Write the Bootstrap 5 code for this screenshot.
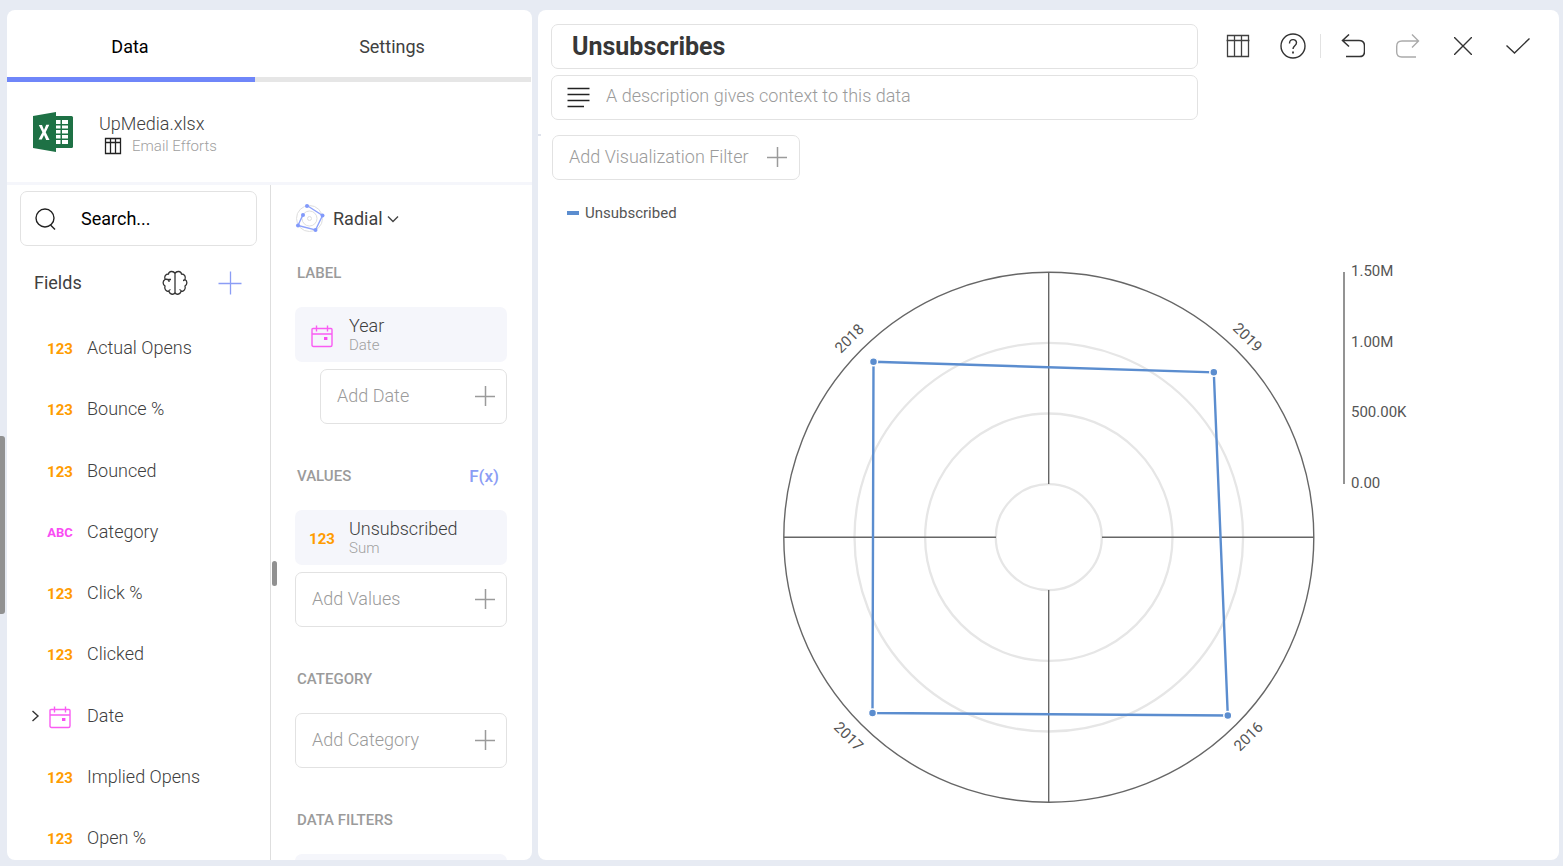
<!DOCTYPE html>
<html lang="en">
<head>
<meta charset="utf-8">
<meta name="viewport" content="width=device-width, initial-scale=1">
<title>Visualization Editor</title>
<link href="https://cdn.jsdelivr.net/npm/bootstrap@5.3.0/dist/css/bootstrap.min.css" rel="stylesheet">
<style>
  :root { --line:#e2e2e2; --ink:#404040; --muted:#9b9b9b; --accent:#6f86f9; --soft:#f5f6fb; }
  body { background:#e7ebf3; font-family:Roboto, "Liberation Sans", sans-serif; font-size:18px; line-height:24px; color:var(--ink); font-weight:300; }
  svg { display:block; fill:none; flex:none; }
  button { color:inherit; font:inherit; background:none; border:0; padding:0; }
  .shell { height:100vh; padding:10px 4px 6px 7px; gap:6px; }
  .pane { background:#fff; border-radius:8px; overflow:hidden; }
  .side { width:525px; flex:none; }
  .page-thumb { left:0; top:436px; width:5px; height:178px; background:#919191; border-radius:0 3px 3px 0; }
  .tabs-row { padding-right:1px; flex:none; }
  .tab-btn { height:72px; border-bottom:5px solid #e6e6e6; font-weight:400; padding:6px 2px 0 0; }
  .tab-btn.on { width:248px; border-color:var(--accent); color:#000; }
  .source { height:103px; flex:none; border-bottom:3px solid var(--soft); padding:0 24px 0 25px; }
  .source-name { line-height:27px; }
  .source-sheet { gap:10px; margin-left:5px; }
  .sub { font-size:15px; line-height:18px; color:#a0a0a0; }
  .lower { min-height:0; }
  .fields-col { width:264px; flex:none; border-right:1px solid #dedede; padding-top:6px; }
  .box { border:1px solid var(--line); border-radius:7px; }
  .search { height:55px; margin:0 13px; padding:0 14px; gap:24px; }
  .plain-input { border:0; outline:0; background:none; padding:0; min-width:0; flex:1; color:inherit; font:inherit; }
  .search .plain-input { color:#000; font-weight:400; }
  .plain-input::placeholder { color:inherit; opacity:1; }
  .fields-head { height:74px; padding:0 28px 0 27px; font-weight:400; }
  .head-tools { gap:30px; }
  .field-list { padding-top:6px; }
  .field { height:44px; flex:none; padding-left:24px; }
  .field .caret { width:16px; }
  .kind { width:26px; font-size:15px; font-weight:700; text-align:center; color:#ff9c00; padding-top:2px; }
  .kind.abc { color:#f94cf3; font-size:13px; }
  .kind-gap { gap:14px; }
  .setup { padding:13px 25px 0 24px; overflow:hidden; }
  .radial { height:42px; margin-bottom:-2px; font-weight:400; }
  .sec { font-size:15px; line-height:20px; font-weight:500; color:var(--muted); margin:42px 2px 24px; height:20px; }
  .sec.first { margin-top:25px; }
  .fx { color:#8b9df5; font-size:17px; font-weight:500; margin-right:6px; }
  .chip { background:var(--soft); border-radius:7px; height:55px; flex:none; padding-left:14px; gap:14px; margin-bottom:7px; text-align:left; }
  .chip-name { line-height:21px; }
  .add { height:55px; flex:none; padding:0 11px 2px 16px; color:var(--muted); }
  .inset { margin-left:25px; }
  .handle { left:1px; top:376px; width:5px; height:25px; border-radius:3px; background:#919191; }
  .main-pane { padding:14px 13px 0; }
  .title-box { height:45px; padding:0 20px; }
  .title-box .plain-input { font-size:25px; font-weight:700; color:#373737; }
  .desc-box { height:45px; margin-top:6px; padding:0 15px 2px; gap:16px; color:var(--muted); }
  .desc-box .plain-input { padding-bottom:2px; }
  .toolbar { margin-left:12px; margin-right:1px; }
  .tool { width:55px; height:44px; }
  .tool-sep { width:1px; height:24px; margin-right:4px; background:var(--line); }
  .filter { height:45px; width:248px; margin:15px 0 0 1px; padding:0 12px 2px 16px; color:var(--muted); }
  .legend { height:30px; margin:18px 0 0 16px; font-size:15px; font-weight:400; color:#555; gap:6px; }
  .swatch { width:12px; height:4px; background:#5b8dcf; }
  .chart { flex:1; min-height:0; width:100%; }
  .chart text { font-size:15px; fill:#555; font-weight:400; }
  .split-mark { left:0; top:124px; width:3px; height:2px; background:#dfe3ec; }
</style>
</head>
<body>
<svg width="0" height="0" class="position-absolute" aria-hidden="true">
  <symbol id="plus" viewBox="0 0 20 20"><path d="M0 10.500H20M10.500 0V20" stroke="currentColor" stroke-width="1.500"/></symbol>
  <symbol id="cal" viewBox="0 0 22 24"><path d="M2 4.500h18q1 0 1 1V21q0 1.500-1.500 1.500h-17Q1 22.500 1 21V5.500q0-1 1-1ZM1 10h20M5.500 1.500v6M16.500 1.500v6" stroke="#f95cf3" stroke-width="1.400"/><rect x="13" y="13" width="3.400" height="3" fill="#f94cf3"/></symbol>
  <symbol id="grid" viewBox="0 0 24 24"><path d="M1.500 1.500h21v21h-21zM0.500 6.500h23M8.500 1v22M15.500 1v22" stroke="currentColor" stroke-width="1.300"/></symbol>
  <symbol id="grid-small" viewBox="0 0 18 18"><path d="M1.500 1.500h15v15h-15zM1 5.500h16M6.500 1v16M11.500 1v16" stroke="currentColor" stroke-width="1.300"/></symbol>
</svg>
<div class="shell d-flex">
  <div class="page-thumb position-absolute"></div>
  <aside class="pane side d-flex flex-column">
    <div class="tabs-row d-flex">
      <button class="tab-btn on">Data</button>
      <button class="tab-btn flex-fill">Settings</button>
    </div>
    <div class="source d-flex align-items-center">
      <svg width="43" height="42" viewBox="0 0 43 42" aria-hidden="true">
        <path d="M23 5h16.500q1.500 0 1.500 1.500v29q0 1.500-1.500 1.500H23z" fill="#1e7145"/>
        <path d="M24 9h4.500v4H24zM30 9h6v4h-6zM24 14.500h4.500v3H24zM30 14.500h6v3h-6zM24 19h4.500v3.500H24zM30 19h6v3.500h-6zM24 24h4.500v3.500H24zM30 24h6v3.500h-6zM24 29h4.500v4H24zM30 29h6v4h-6z" fill="#fff"/>
        <path d="M1 5 24 1v40L1 37z" fill="#1e7145"/>
        <path d="M6.800 14h3.200l2 5 2.200-5.300h3.100L13.700 21.300l3.800 7.700h-3.300L12 24l-2.200 4.500H6.600l3.800-7.200z" fill="#fff"/>
      </svg>
      <div class="flex-fill ms-4">
        <div class="source-name">UpMedia.xlsx</div>
        <div class="source-sheet d-flex align-items-center sub"><svg width="18" height="18" color="#222"><use href="#grid-small"/></svg><span>Email Efforts</span></div>
      </div>
      <button aria-label="More"><svg width="16" height="20" viewBox="0 0 16 20" fill="#333"><circle cx="8" cy="3" r="1.600"/><circle cx="8" cy="10" r="1.600"/><circle cx="8" cy="17" r="1.600"/></svg></button>
    </div>
    <div class="lower d-flex flex-fill overflow-hidden">
      <section class="fields-col d-flex flex-column">
        <label class="search box d-flex align-items-center flex-shrink-0">
          <svg width="22" height="24" viewBox="0 0 22 24" stroke="#222" stroke-width="1.400"><circle cx="10" cy="11" r="9"/><path d="m15.500 18 4.500 4.500"/></svg>
          <input class="plain-input" type="text" placeholder="Search..." aria-label="Search fields">
        </label>
        <div class="fields-head d-flex align-items-center justify-content-between flex-shrink-0">
          <span>Fields</span>
          <span class="head-tools d-flex align-items-center">
            <button aria-label="Smart fields"><svg width="26" height="26" viewBox="0 0 26 26" stroke="#333" stroke-width="1.300"><path d="M13 2v22M13 3.500C11.500.5 7 1 6.500 4 3.500 4 2 6.500 3 9.500 .5 11 .5 14.500 3 16c-1 3 1 5.500 4 5.500C8 25 12 25 13 22.500M13 3.500C14.500.5 19 1 19.500 4c3 0 4.500 2.500 3.500 5.500 2.500 1.500 2.500 5 0 6.500 1 3-1 5.500-4 5.500-1 3.500-5 3.500-6 1M3 9.500c1.500-.5 3 0 4 1M9 9.500H7v2.500M19.500 21.500q-.5-1.500-2-2M6.500 21.500q.5-1.500 2-2M23 9.500q-1 1-2 1"/></svg></button>
            <button aria-label="Add field"><svg width="24" height="24" color="#8b9df5" viewBox="0 0 24 24"><path d="M.5 12.500h23M12.500.5v23" stroke="currentColor" stroke-width="1.300"/></svg></button>
          </span>
        </div>
        <div class="field-list d-flex flex-column flex-fill justify-content-between overflow-hidden">
          <div class="field d-flex align-items-center"><span class="caret"></span><span class="d-flex align-items-center kind-gap"><span class="kind">123</span>Actual Opens</span></div>
          <div class="field d-flex align-items-center"><span class="caret"></span><span class="d-flex align-items-center kind-gap"><span class="kind">123</span>Bounce %</span></div>
          <div class="field d-flex align-items-center"><span class="caret"></span><span class="d-flex align-items-center kind-gap"><span class="kind">123</span>Bounced</span></div>
          <div class="field d-flex align-items-center"><span class="caret"></span><span class="d-flex align-items-center kind-gap"><span class="kind abc">ABC</span>Category</span></div>
          <div class="field d-flex align-items-center"><span class="caret"></span><span class="d-flex align-items-center kind-gap"><span class="kind">123</span>Click %</span></div>
          <div class="field d-flex align-items-center"><span class="caret"></span><span class="d-flex align-items-center kind-gap"><span class="kind">123</span>Clicked</span></div>
          <div class="field d-flex align-items-center"><button class="caret" aria-label="Expand Date"><svg width="9" height="12" viewBox="0 0 9 12" stroke="#333" stroke-width="1.400"><path d="m1.500 1 5.500 5-5.500 5"/></svg></button><span class="d-flex align-items-center kind-gap"><span class="kind d-flex justify-content-center"><svg width="22" height="24"><use href="#cal"/></svg></span>Date</span></div>
          <div class="field d-flex align-items-center"><span class="caret"></span><span class="d-flex align-items-center kind-gap"><span class="kind">123</span>Implied Opens</span></div>
          <div class="field d-flex align-items-center"><span class="caret"></span><span class="d-flex align-items-center kind-gap"><span class="kind">123</span>Open %</span></div>
        </div>
      </section>
      <section class="setup position-relative flex-fill d-flex flex-column">
        <div class="handle position-absolute"></div>
        <button class="radial d-flex align-items-center flex-shrink-0">
          <svg width="30" height="30" viewBox="0 0 30 30" class="me-2"><g stroke="#dedede"><circle cx="14.500" cy="14.500" r="13"/><circle cx="14.500" cy="14.500" r="7.500"/><circle cx="14.500" cy="14.500" r="2"/></g><path d="M8 10.500 3 21.500 20.500 26 27.500 11.500 12 1.500" stroke="#8ea2fb" stroke-width="1.400"/><g fill="#8199fb"><circle cx="12" cy="2" r="2"/><circle cx="27.500" cy="11.500" r="2"/><circle cx="8" cy="11" r="2"/><circle cx="3" cy="21.500" r="2"/><circle cx="20.500" cy="26" r="2"/></g></svg>
          Radial
          <svg width="12" height="8" viewBox="0 0 12 8" class="ms-1" stroke="#444" stroke-width="1.400"><path d="m1 1.500 5 5 5-5"/></svg>
        </button>
        <h2 class="sec first">LABEL</h2>
        <button class="chip d-flex align-items-center"><span class="kind d-flex justify-content-center"><svg width="22" height="24"><use href="#cal"/></svg></span><span><span class="d-block chip-name">Year</span><span class="sub d-block">Date</span></span></button>
        <button class="add box inset d-flex align-items-center justify-content-between">Add Date<svg width="20" height="20"><use href="#plus"/></svg></button>
        <h2 class="sec d-flex justify-content-between"><span>VALUES</span><button class="fx">F(x)</button></h2>
        <button class="chip d-flex align-items-center"><span class="kind">123</span><span><span class="d-block chip-name">Unsubscribed</span><span class="sub d-block">Sum</span></span></button>
        <button class="add box d-flex align-items-center justify-content-between">Add Values<svg width="20" height="20"><use href="#plus"/></svg></button>
        <h2 class="sec">CATEGORY</h2>
        <button class="add box d-flex align-items-center justify-content-between">Add Category<svg width="20" height="20"><use href="#plus"/></svg></button>
        <h2 class="sec">DATA FILTERS</h2>
        <div class="chip"></div>
      </section>
    </div>
  </aside>
  <main class="pane main-pane position-relative flex-fill d-flex flex-column">
    <div class="split-mark position-absolute"></div>
    <div class="d-flex">
      <div class="flex-fill">
        <div class="title-box box d-flex align-items-center"><input class="plain-input" type="text" value="Unsubscribes" aria-label="Title"></div>
        <label class="desc-box box d-flex align-items-center">
          <svg width="23" height="22" viewBox="0 0 23 22" stroke="#222" stroke-width="1.400"><path d="M.5 2.500h22M.5 8.500h22M.5 14.500h22M.5 20.500h16.500"/></svg>
          <input class="plain-input" type="text" placeholder="A description gives context to this data" aria-label="Description">
        </label>
      </div>
      <div class="toolbar d-flex align-items-center align-self-start">
        <button class="tool d-flex align-items-center justify-content-center" aria-label="Data grid"><svg width="24" height="24"><use href="#grid"/></svg></button>
        <button class="tool d-flex align-items-center justify-content-center" aria-label="Help"><svg width="26" height="26" viewBox="0 0 26 26" stroke="#333" stroke-width="1.400"><circle cx="13" cy="13" r="12"/><path d="M9.500 10.500c0-5 7-5 7-.8 0 3-3.500 3.100-3.500 6.300"/><path d="M13 18.500v2" stroke-width="1.800"/></svg></button>
        <div class="tool-sep"></div>
        <button class="tool d-flex align-items-center justify-content-center" aria-label="Undo"><svg width="24" height="24" viewBox="0 0 24 24" stroke="#333" stroke-width="1.500"><path d="M8 .5 1.500 6.500 8 12.500M1.500 6.500H18q5.500 0 5.500 5.500v5.500q0 5-5 5H5"/></svg></button>
        <button class="tool d-flex align-items-center justify-content-center" aria-label="Redo" disabled><svg width="24" height="24" viewBox="0 0 24 24" stroke="#aaa" stroke-width="1.400"><path d="m16 .5 6.500 6.500L16 13.500M22.500 7H6Q.7 7 .7 12.500V18q0 5 5 5H20"/></svg></button>
        <button class="tool d-flex align-items-center justify-content-center" aria-label="Close"><svg width="18" height="18" viewBox="0 0 18 18" stroke="#333" stroke-width="1.400"><path d="m0 0 18 18M18 0 0 18"/></svg></button>
        <button class="tool d-flex align-items-center justify-content-center" aria-label="Apply"><svg width="24" height="16" viewBox="0 0 24 16" stroke="#333" stroke-width="1.400"><path d="m.5 7.500 8 7.500 15-14.500"/></svg></button>
      </div>
    </div>
    <button class="filter box d-flex align-items-center justify-content-between flex-shrink-0">Add Visualization Filter<svg width="20" height="20"><use href="#plus"/></svg></button>
    <div class="legend d-flex align-items-center flex-shrink-0"><span class="swatch"></span>Unsubscribed</div>
    <svg class="chart" viewBox="551 228 995 632" role="img" aria-label="Unsubscribed by year">
      <g stroke="#e6e6e6" stroke-width="2.300"><circle cx="1048.800" cy="537.200" r="53"/><circle cx="1048.800" cy="537.200" r="123.700"/><circle cx="1048.800" cy="537.200" r="194.300"/></g>
      <g stroke="#666" stroke-width="1.400"><circle cx="1048.800" cy="537.200" r="265"/><path d="M1048.700 272v212M1048.700 590v212M784 537.200h212M1102 537.200h212M1344 272v212"/></g>
      <path d="M873.500 361.800 1213.800 372.300 1227.800 715.500 872.500 713Z" stroke="#5b8dcf" stroke-width="2.400"/>
      <g fill="#5b8dcf" stroke="#fff" stroke-width="1.500"><circle cx="873.500" cy="361.800" r="4"/><circle cx="1213.800" cy="372.300" r="4"/><circle cx="1227.800" cy="715.500" r="4"/><circle cx="872.500" cy="713" r="4"/></g>
      <g text-anchor="middle">
        <text transform="translate(853 342) rotate(-45)">2018</text>
        <text transform="translate(1244 341) rotate(45)">2019</text>
        <text transform="translate(1252 740) rotate(-45)">2016</text>
        <text transform="translate(845 740) rotate(45)">2017</text>
      </g>
      <text x="1351" y="276">1.50M</text><text x="1351" y="347">1.00M</text><text x="1351" y="417">500.00K</text><text x="1351" y="488">0.00</text>
    </svg>
  </main>
</div>
<script src="https://cdn.jsdelivr.net/npm/bootstrap@5.3.0/dist/js/bootstrap.bundle.min.js"></script>
</body>
</html>
